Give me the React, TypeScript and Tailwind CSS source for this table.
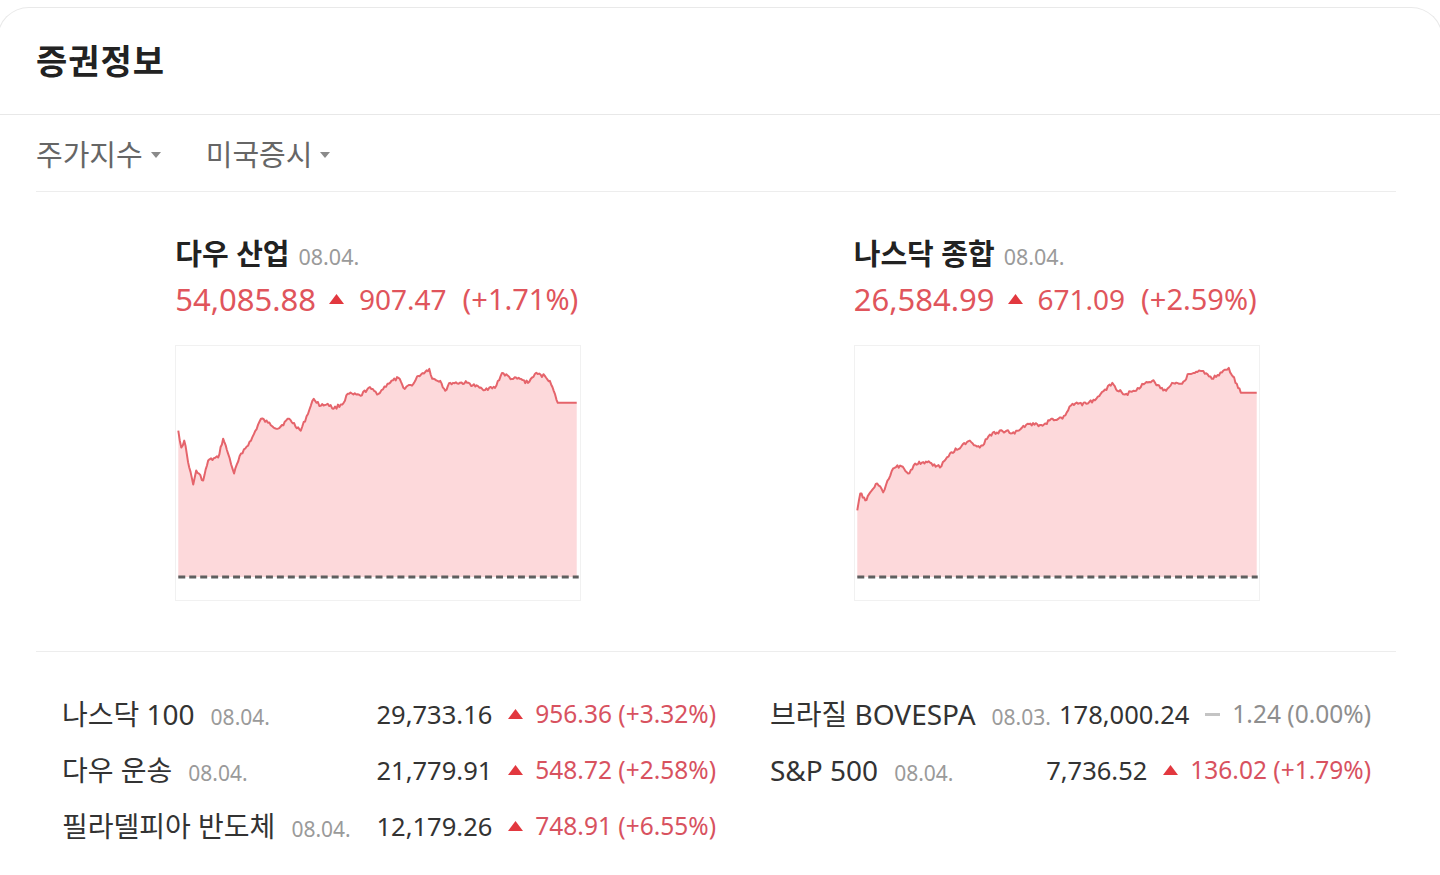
import React from 'react';

type Pt = [number, number];

const BASE_Y = 232;

// key points of each intraday line, in chart-box pixels (405 x 255)
const dowKeys: Pt[] = [
  [2, 85], [5, 102], [8, 95], [13, 122], [17, 139], [20, 125], [27, 135], [32, 115], [42, 112], [47, 93],
  [52, 108], [58, 128], [65, 108], [75, 95], [85, 73], [92, 77], [102, 83], [113, 73], [125, 85], [138, 53],
  [145, 60], [152, 58], [158, 63], [168, 57], [172, 48], [185, 50], [193, 42], [203, 48], [212, 38], [223, 32],
  [228, 42], [238, 38], [243, 30], [254, 23], [257, 33], [265, 35], [270, 45], [275, 37], [292, 37], [307, 43],
  [320, 42], [327, 27], [337, 33], [345, 33], [353, 37], [360, 28], [370, 30], [375, 35], [383, 57], [402, 57],
];

const nasdaqKeys: Pt[] = [
  [2, 165], [5, 148], [10, 155], [15, 147], [22, 138], [28, 147], [38, 123], [45, 120], [53, 128], [60, 118],
  [75, 117], [85, 122], [95, 108], [115, 95], [125, 102], [138, 87], [152, 85], [160, 88], [173, 78], [188, 80],
  [198, 73], [208, 73], [218, 58], [232, 58], [242, 53], [258, 37], [263, 45], [272, 48], [282, 45], [288, 38],
  [298, 35], [312, 45], [318, 37], [328, 38], [335, 28], [348, 25], [358, 33], [375, 22], [387, 47], [403, 47],
];

function buildLine(keys: Pt[], seed: number) {
  let s = seed;
  const rand = () => {
    s = (s * 9301 + 49297) % 233280;
    return s / 233280;
  };
  const pts: Pt[] = [];
  for (let i = 0; i < keys.length - 1; i++) {
    const [x0, y0] = keys[i];
    const [x1, y1] = keys[i + 1];
    const flat = i === keys.length - 2;
    const n = Math.max(1, Math.round((x1 - x0) / 1.4));
    for (let j = 0; j < n; j++) {
      const t = j / n;
      const noise = j === 0 || flat ? 0 : (rand() - 0.5) * 3.4;
      pts.push([x0 + (x1 - x0) * t, y0 + (y1 - y0) * t + noise]);
    }
  }
  pts.push(keys[keys.length - 1]);
  const line = pts.map((p, i) => `${i ? 'L' : 'M'}${p[0].toFixed(1)} ${p[1].toFixed(1)}`).join(' ');
  const first = pts[0];
  const last = pts[pts.length - 1];
  const area = `${line} L${last[0]} ${BASE_Y} L${first[0]} ${BASE_Y} Z`;
  return { line, area };
}

function Chart({ keys, seed }: { keys: Pt[]; seed: number }) {
  const { line, area } = buildLine(keys, seed);
  return (
    <div className="w-[406px] h-[256px] border border-[#f1f1f1] bg-white">
      <svg width="404" height="254" viewBox="0 0 405 255" className="block">
        <path d={area} fill="#fdd9db" />
        <path d={line} fill="none" stroke="#e5646b" strokeWidth="2" strokeLinejoin="round" />
        <line x1="2" y1={BASE_Y} x2="404" y2={BASE_Y} stroke="#5f5f5f" strokeWidth="3" strokeDasharray="7 4" />
      </svg>
    </div>
  );
}

function UpIcon({ className = '' }: { className?: string }) {
  return (
    <svg width="15" height="10" viewBox="0 0 15 10" className={className}>
      <polygon points="7.5,0 15,10 0,10" fill="#e2383f" />
    </svg>
  );
}

function FlatIcon() {
  return <span className="inline-block w-[15px] h-[3px] bg-[#c4c4c4]" />;
}

function Caret() {
  return (
    <svg width="10" height="6" viewBox="0 0 10 6" className="ml-[8px]">
      <polygon points="0,0 10,0 5,6" fill="#8a8a8a" />
    </svg>
  );
}

const charts = [
  { name: '다우 산업', date: '08.04.', value: '54,085.88', diff: '907.47', rate: '(+1.71%)', keys: dowKeys, seed: 17 },
  { name: '나스닥 종합', date: '08.04.', value: '26,584.99', diff: '671.09', rate: '(+2.59%)', keys: nasdaqKeys, seed: 53 },
];

interface Row {
  name: string;
  date: string;
  value: string;
  change: string;
  up: boolean;
}

const leftRows: Row[] = [
  { name: '나스닥 100', date: '08.04.', value: '29,733.16', change: '956.36 (+3.32%)', up: true },
  { name: '다우 운송', date: '08.04.', value: '21,779.91', change: '548.72 (+2.58%)', up: true },
  { name: '필라델피아 반도체', date: '08.04.', value: '12,179.26', change: '748.91 (+6.55%)', up: true },
];

const rightRows: Row[] = [
  { name: '브라질 BOVESPA', date: '08.03.', value: '178,000.24', change: '1.24 (0.00%)', up: false },
  { name: 'S&P 500', date: '08.04.', value: '7,736.52', change: '136.02 (+1.79%)', up: true },
];

function IndexRow({ row }: { row: Row }) {
  return (
    <div className="h-[56px] flex items-center justify-between whitespace-nowrap">
      <div className="flex items-baseline">
        <span className="text-[28px] text-[#333]">{row.name}</span>
        <span className="ml-[16px] text-[21px] text-[#9a9a9a]">{row.date}</span>
      </div>
      <div className="flex items-center ml-[6px]">
        <span className="text-[25.5px] text-[#333]">{row.value}</span>
        <span className="ml-[16px] mr-[12px] flex items-center">{row.up ? <UpIcon /> : <FlatIcon />}</span>
        <span className={`text-[24.5px] ${row.up ? 'text-[#d8525f]' : 'text-[#8e8e8e]'}`}>{row.change}</span>
      </div>
    </div>
  );
}

export default function App() {
  return (
    <div
      className="min-h-screen bg-white pt-[7px] overflow-hidden"
      style={{ fontFamily: '"Noto Sans", "Noto Sans CJK KR", sans-serif' }}
    >
      <div className="-mx-[3px] border border-b-0 border-[#e9e9e9] rounded-t-[32px] bg-white">
        {/* Header */}
        <div className="h-[107px] flex items-center px-[38px] border-b border-[#e8e8e8]">
          <h2 className="text-[34px] font-bold text-[#222] leading-none tracking-[1px]">증권정보</h2>
        </div>

        <div className="ml-[38px] mr-[46px]">
          {/* Tabs */}
          <div className="h-[77px] flex items-center pt-[3px] border-b border-[#ededed]">
            <button className="flex items-center text-[29px] text-[#666]">
              주가지수
              <Caret />
            </button>
            <button className="flex items-center ml-[45px] text-[29px] text-[#666]">
              미국증시
              <Caret />
            </button>
          </div>

          {/* Charts */}
          <div className="grid grid-cols-2 pl-[3px] pt-[40px] pb-[50px] border-b border-[#ededed]">
            {charts.map((c) => (
              <div key={c.name} className="flex justify-center">
                <div className="w-[406px]">
                  <div className="flex items-baseline h-[36px] whitespace-nowrap">
                    <span className="text-[29px] font-bold text-[#222]">{c.name}</span>
                    <span className="ml-[9px] text-[21.5px] text-[#9a9a9a]">{c.date}</span>
                  </div>
                  <div className="flex items-center h-[40px] mt-[11px] text-[#e0555c] whitespace-nowrap">
                    <span className="text-[31px]">{c.value}</span>
                    <UpIcon className="ml-[13px]" />
                    <span className="ml-[15px] text-[28px]">{c.diff}</span>
                    <span className="ml-[16px] text-[29px]">{c.rate}</span>
                  </div>
                  <div className="mt-[26px]">
                    <Chart keys={c.keys} seed={c.seed} />
                  </div>
                </div>
              </div>
            ))}
          </div>

          {/* Index list */}
          <div className="grid grid-cols-[654px_1fr] gap-x-[54px] pl-[26px] pr-[25px] pt-[34px]">
            <div>
              {leftRows.map((r) => (
                <IndexRow key={r.name} row={r} />
              ))}
            </div>
            <div>
              {rightRows.map((r) => (
                <IndexRow key={r.name} row={r} />
              ))}
            </div>
          </div>
        </div>
      </div>
    </div>
  );
}
